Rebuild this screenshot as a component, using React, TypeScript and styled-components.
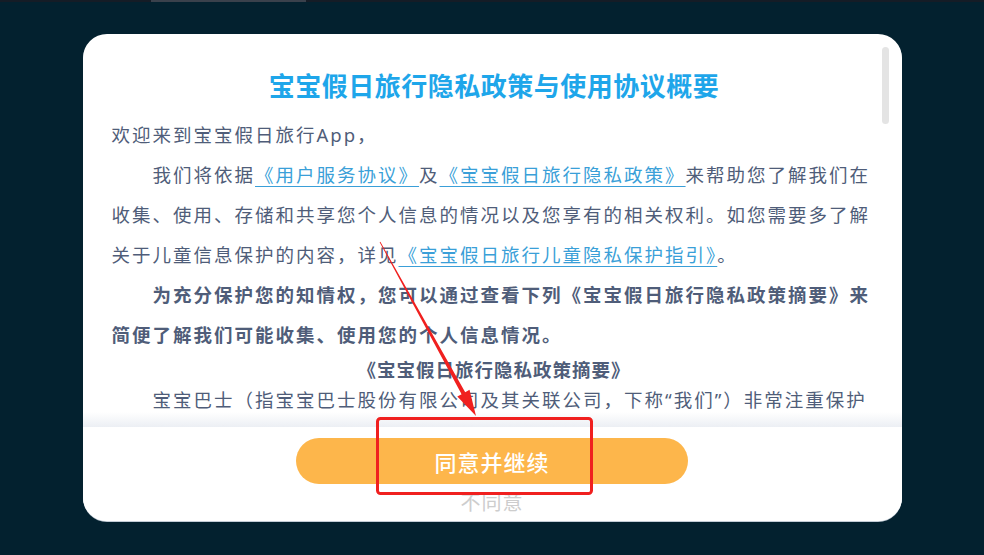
import styled, { createGlobalStyle } from "styled-components";

const GlobalStyle = createGlobalStyle`
  html, body {
    margin: 0;
    padding: 0;
    background-color: #03212f;
  }
  * {
    box-sizing: border-box;
  }
`

const Page = styled.div`
  position: relative;
  width: 984px;
  height: 555px;
  overflow: hidden;
  display: flex;
  flex-direction: column;
  align-items: center;
  background-color: #03212f;
  font-family: "Noto Sans CJK SC", "Noto Sans", sans-serif;
`

const TopEdge = styled.div`
  width: 100%;
  height: 2px;
  background-color: #151c26;
  display: flex;
  padding-left: 151px;
`

const TopEdgeMark = styled.div`
  width: 155px;
  height: 2px;
  background-color: #3a414c;
`

const Modal = styled.div`
  position: relative;
  margin-top: 32px;
  width: 819px;
  height: 487px;
  border-radius: 24px;
  background-color: #ffffff;
  overflow: hidden;
  display: flex;
  flex-direction: column;
  box-shadow: 0 1px 0 #c3ccd6;
`

const Body = styled.div`
  position: relative;
  flex: 1;
  overflow: hidden;
  padding: 33px 25px 0 29px;

  &::after {
    content: "";
    position: absolute;
    left: 0;
    right: 0;
    bottom: 0;
    height: 15px;
    background: linear-gradient(to bottom, rgba(255, 255, 255, 0.92), #eceff4);
  }
`

const ScrollThumb = styled.div`
  position: absolute;
  top: 13px;
  right: 13px;
  width: 7px;
  height: 77px;
  border-radius: 4px;
  background-color: #e4e4e4;
`

const Title = styled.h1`
  margin: 0 0 12px;
  text-align: center;
  font-size: 26px;
  line-height: 36px;
  letter-spacing: 0.5px;
  font-weight: 700;
  color: #1ea6ea;
`

const Paragraph = styled.p<{ $indent?: boolean; $bold?: boolean; $lh?: number }>`
  margin: 0;
  font-family: "Noto Sans", "Noto Sans CJK SC", sans-serif;
  font-size: 18.5px;
  letter-spacing: 2px;
  line-height: ${({ $lh }) => $lh ?? 40}px;
  color: #4f5d79;
  text-indent: ${({ $indent }) => ($indent ? "41px" : "0")};
  font-weight: ${({ $bold }) => ($bold ? 700 : 400)};
`

const Heading = styled.p`
  margin: 0;
  text-align: center;
  font-size: 18.5px;
  letter-spacing: 1px;
  line-height: 28px;
  font-weight: 700;
  color: #4f5d79;
`

const Link = styled.a`
  color: #3a9fd8;
  text-decoration: underline;
  text-decoration-thickness: 1px;
  text-underline-offset: 4px;
`

const Footer = styled.div`
  position: relative;
  height: 94px;
  flex-shrink: 0;
  display: flex;
  flex-direction: column;
  align-items: center;
  background-color: #ffffff;
`

const AgreeButton = styled.button`
  margin-top: 11px;
  width: 392px;
  height: 46px;
  border: none;
  border-radius: 23px;
  background-color: #fdb64b;
  color: #ffffff;
  font-family: inherit;
  font-size: 22px;
  font-weight: 500;
  letter-spacing: 1px;
  cursor: pointer;
`

const Disagree = styled.div`
  margin-top: 7px;
  font-size: 20px;
  line-height: 22px;
  color: #cdcdcd;
  letter-spacing: 1px;
`

const Annotation = styled.svg`
  position: absolute;
  left: 0;
  top: 0;
  pointer-events: none;
`

export default function App() {
  return (
    <>
      <GlobalStyle />
      <Page>
        <TopEdge>
          <TopEdgeMark />
        </TopEdge>
        <Modal>
          <Body>
            <Title>宝宝假日旅行隐私政策与使用协议概要</Title>
            <Paragraph>欢迎来到宝宝假日旅行App，</Paragraph>
            <Paragraph $indent>
              我们将依据<Link>《用户服务协议》</Link>及<Link>《宝宝假日旅行隐私政策》</Link>来帮助您了解我们在收集、使用、存储和共享您个人信息的情况以及您享有的相关权利。如您需要多了解关于儿童信息保护的内容，详见<Link>《宝宝假日旅行儿童隐私保护指引》</Link>。
            </Paragraph>
            <Paragraph $indent $bold>
              为充分保护您的知情权，您可以通过查看下列《宝宝假日旅行隐私政策摘要》来简便了解我们可能收集、使用您的个人信息情况。
            </Paragraph>
            <Heading>《宝宝假日旅行隐私政策摘要》</Heading>
            <Paragraph $indent $lh={34}>
              宝宝巴士（指宝宝巴士股份有限公司及其关联公司，下称“我们”）非常注重保护您的个人信息及隐私，我们希望通过本摘要向您简洁介绍我们如何收集和使用您的个人信息，以及您可以如何管理您的个人信息。
            </Paragraph>
            <ScrollThumb />
          </Body>
          <Footer>
            <AgreeButton>同意并继续</AgreeButton>
            <Disagree>不同意</Disagree>
          </Footer>
        </Modal>
        <Annotation width="984" height="555" viewBox="0 0 984 555">
          <rect x="377.5" y="418.5" width="214" height="75" rx="3" fill="none" stroke="#f0201f" strokeWidth="3" />
          <polygon
            points="380.35,241.8 465.2,392.2 469.5,389.8 476,416 457.3,396.6 461.6,394.2 379.65,242.2"
            fill="#f0201f"
          />
        </Annotation>
      </Page>
    </>
  );
}
